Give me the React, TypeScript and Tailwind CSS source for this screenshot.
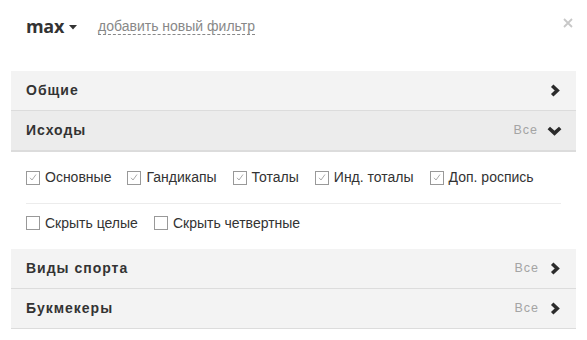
const outcomes = ['Основные', 'Гандикапы', 'Тоталы', 'Инд. тоталы', 'Доп. роспись'];
const hides = ['Скрыть целые', 'Скрыть четвертные'];

const Check = ({ checked, label }: { checked: boolean; label: string }) => (
  <label className="flex items-center gap-[5px] text-[14px] text-[#333]">
    <span className="w-[14px] h-[14px] border border-[#999] bg-white flex items-center justify-center">
      {checked && (
        <svg width="8" height="7" viewBox="0 0 8 7" fill="none">
          <path d="M1 3.8 L3 6 L7 0.5" stroke="#aaa" strokeWidth="1" />
        </svg>
      )}
    </span>
    {label}
  </label>
);

const ChevronRight = () => (
  <svg width="10" height="13" viewBox="0 0 10 13" fill="none">
    <path d="M2.2 1.8 L7.2 6.5 L2.2 11.2" stroke="#2b2b2b" strokeWidth="3.6" strokeLinejoin="miter" />
  </svg>
);

const ChevronDown = () => (
  <svg width="15" height="10" viewBox="0 0 15 10" fill="none">
    <path d="M1.8 2 L7.5 7.2 L13.2 2" stroke="#2b2b2b" strokeWidth="3.6" strokeLinejoin="miter" />
  </svg>
);

const Section = ({
  title,
  all,
  open,
}: {
  title: string;
  all?: boolean;
  open?: boolean;
}) => (
  <div
    className={
      open
        ? 'h-[41px] flex items-center px-[15px] bg-[#ececec] border-b-2 border-[#dcdcdc]'
        : 'h-[40px] flex items-center px-[15px] bg-[#f3f3f3] border-b border-[#dcdcdc]'
    }
  >
    <span className="font-bold text-[14px] tracking-[1px] text-[#333]">{title}</span>
    <div className={open ? 'ml-auto flex items-center gap-[9px] mr-[-1px]' : 'ml-auto flex items-center gap-[11px] mr-[1px]'}>
      {all && <span className="text-[12.5px] tracking-[1px] text-[#a4a4a4]">Все</span>}
      {open ? <ChevronDown /> : <ChevronRight />}
    </div>
  </div>
);

export default function App() {
  return (
    <div className="w-[587px] h-[340px] bg-white font-['Liberation_Sans',Arial,sans-serif] px-[11px] pt-[14px]">
      {/* Header */}
      <div className="flex items-center h-[24px] px-[15px] mb-[33px]">
        <span className="font-bold text-[18px] text-[#333] font-['Open_Sans',sans-serif] tracking-[-0.3px]">max</span>
        <svg width="8" height="5" viewBox="0 0 8 5" className="ml-[5px] mt-[2px]">
          <path d="M0 0 H8 L4 4.5 Z" fill="#333" />
        </svg>
        <span className="ml-[21px] text-[14px] text-[#888] border-b border-dashed border-[#888] leading-[16px]">
          добавить новый фильтр
        </span>
        <svg width="10" height="10" viewBox="0 0 10 10" className="ml-auto mr-[-12px] mt-[-6px]">
          <path d="M1 1 L9 9 M9 1 L1 9" stroke="#c8c8c8" strokeWidth="1.8" />
        </svg>
      </div>

      <Section title="Общие" />
      <Section title="Исходы" all open />

      <div className="px-[15px]">
        <div className="flex items-center gap-[16px] h-[51px]">
          {outcomes.map((o) => (
            <Check key={o} checked label={o} />
          ))}
        </div>
        <div className="border-t border-[#ececec]" />
        <div className="flex items-center gap-[16px] h-[38px] mb-[7px]">
          {hides.map((o) => (
            <Check key={o} checked={false} label={o} />
          ))}
        </div>
      </div>

      <Section title="Виды спорта" all />
      <Section title="Букмекеры" all />
    </div>
  );
}
